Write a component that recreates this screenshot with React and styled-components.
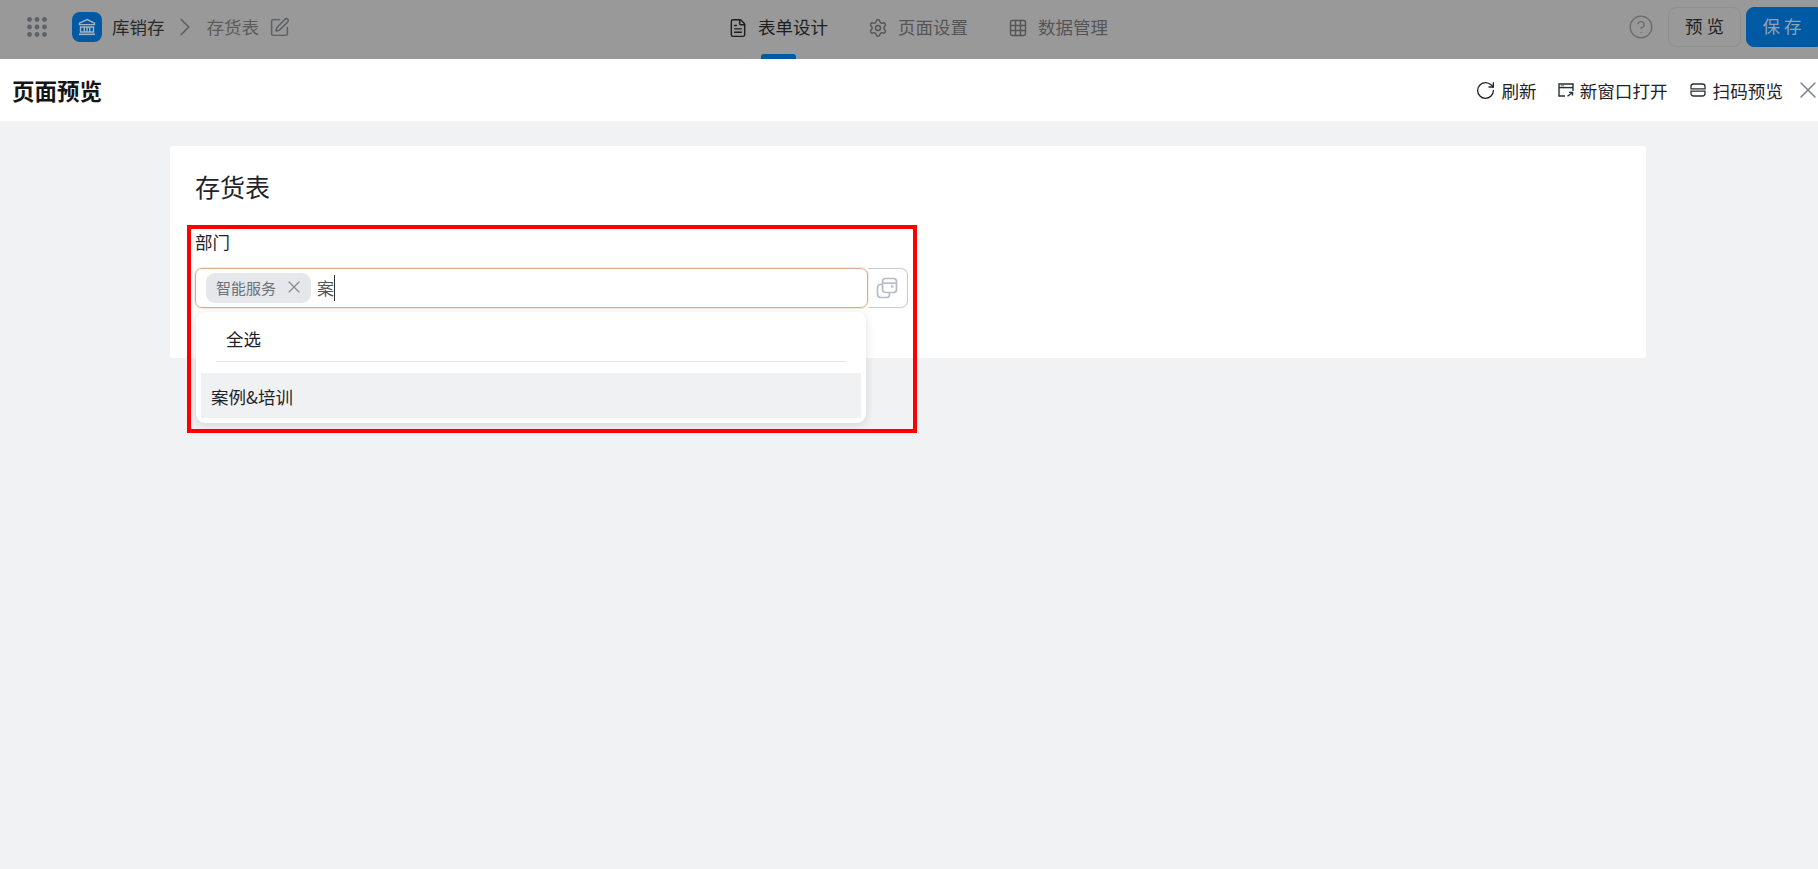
import styled, { createGlobalStyle } from "styled-components";
import {
  ChevronRight,
  CircleHelp,
  FileText,
  Grid3x3,
  RotateCw,
  Settings,
  SquarePen,
  X,
} from "lucide-react";

const GlobalStyle = createGlobalStyle`
  html, body {
    margin: 0;
    padding: 0;
    overflow: hidden;
  }
  body {
    font-family: "Noto Sans CJK SC", "Liberation Sans", sans-serif;
    background: #f1f2f4;
    color: #1f2329;
  }
`;

const Page = styled.div`
  width: 1818px;
  height: 869px;
  display: flex;
  flex-direction: column;
`;

const TopBar = styled.header`
  height: 59px;
  flex: none;
  background: #999999;
  display: grid;
  grid-template-columns: 728px 1fr auto;
  align-items: center;
`;

const Crumbs = styled.div`
  display: flex;
  align-items: center;
  padding: 0 0 5px 27px;
  font-size: 17.5px;
  color: #2a2a2a;
`;

const Dots = styled.svg`
  width: 20px;
  height: 20px;
  margin-right: 25px;
  fill: #5f6368;
`;

const Logo = styled.div`
  width: 30px;
  height: 30px;
  border-radius: 8px;
  background: #0059a3;
  display: flex;
  align-items: center;
  justify-content: center;
  margin-right: 10px;
`;

const Crumb = styled.span`
  color: ${(p) => (p.$muted ? "#5c5c5c" : "#2a2a2a")};
  line-height: 24px;
`;

const CrumbIcon = styled.span`
  display: flex;
  color: #5c5f63;
  margin: ${(p) => p.$margin};
`;

const Tabs = styled.nav`
  display: flex;
  align-items: stretch;
  height: 59px;
  gap: 40px;
`;

const Tab = styled.div`
  position: relative;
  box-sizing: border-box;
  padding-bottom: 3px;
  display: flex;
  align-items: center;
  gap: 10px;
  font-size: 17.5px;
  color: ${(p) => (p.$active ? "#1d1d1d" : "#555555")};

  ${(p) =>
    p.$active &&
    `
    &::after {
      content: "";
      position: absolute;
      left: 33px;
      bottom: 0;
      width: 35px;
      height: 5px;
      border-radius: 3px 3px 0 0;
      background: #0059a3;
    }
  `}
`;

const TabLabel = styled.span`
  padding-bottom: 3px;
`;

const Actions = styled.div`
  display: flex;
  align-items: center;
  padding-bottom: 5px;
  color: #6a6a6a;
`;

const BarButton = styled.button`
  height: 40px;
  width: ${(p) => p.$width}px;
  margin-left: ${(p) => p.$gap}px;
  border-radius: ${(p) => (p.$primary ? "8px 0 0 8px" : "8px")};
  border: 1px solid ${(p) => (p.$primary ? "#0059a3" : "#8f8f8f")};
  background: ${(p) => (p.$primary ? "#0059a3" : "transparent")};
  color: ${(p) => (p.$primary ? "#8fa3b6" : "#222222")};
  font-family: inherit;
  font-size: 17.5px;
  letter-spacing: 4px;
  padding: 0 0 3px 4px;
`;

const PreviewBar = styled.div`
  height: 62px;
  flex: none;
  background: #ffffff;
  display: flex;
  align-items: center;
  justify-content: space-between;
  padding-left: 12px;
`;

const PreviewTitle = styled.h1`
  margin: 0;
  font-size: 22.5px;
  font-weight: 700;
  color: #151515;
`;

const PreviewTools = styled.div`
  display: flex;
  align-items: center;
`;

const Tool = styled.div`
  display: flex;
  align-items: center;
  gap: ${(p) => p.$inner}px;
  font-size: 17.6px;
  color: #1f2329;
  margin-right: ${(p) => p.$gap}px;
`;

const CloseIcon = styled(X)`
  color: #7d828a;
  display: block;
  margin-right: -4px;
`;

const Main = styled.main`
  flex: 1;
  padding: 25px 172px 0 170px;
`;

const Card = styled.section`
  position: relative;
  height: 212px;
  box-sizing: border-box;
  background: #ffffff;
  padding: 21px 25px 0;
`;

const FormTitle = styled.h2`
  margin: 0;
  font-size: 25px;
  font-weight: 400;
  line-height: 38px;
  color: #1f2329;
`;

const Label = styled.div`
  margin-top: 23px;
  font-size: 17.5px;
  line-height: 28px;
  color: #1f2329;
`;

const Row = styled.div`
  margin-top: 12px;
  display: flex;
  width: 713px;
  height: 40px;
`;

const Input = styled.div`
  width: 673px;
  box-sizing: border-box;
  display: flex;
  align-items: center;
  padding-left: 10px;
  border: 1px solid #d9ae8f;
  border-radius: 7px;
  box-shadow: 0 0 0 1px #fbe9dc;
`;

const Tag = styled.div`
  height: 30px;
  width: 105px;
  box-sizing: border-box;
  border-radius: 9px;
  background: #e5e7ea;
  display: flex;
  align-items: center;
  justify-content: space-between;
  padding: 0 7px 2px 10px;
  font-size: 15px;
  color: #6b7079;
`;

const Typed = styled.span`
  margin: 0 0 1px 6px;
  font-size: 17px;
  line-height: 26px;
  color: #555555;
  border-right: 1px solid #333333;
`;

const Addon = styled.div`
  width: 40px;
  box-sizing: border-box;
  border: 1px solid #c5cbd3;
  border-left: none;
  border-radius: 0 7px 7px 0;
  padding-right: 2px;
  display: flex;
  align-items: center;
  justify-content: center;
`;

const Dropdown = styled.div`
  position: absolute;
  left: 26px;
  top: 166px;
  width: 670px;
  height: 111px;
  box-sizing: border-box;
  padding: 0 5px;
  border-radius: 9px;
  background: #ffffff;
  box-shadow: 0 2px 10px rgba(31, 35, 41, 0.14);
`;

const SelectAll = styled.div`
  margin: 0 15px;
  height: 50px;
  box-sizing: border-box;
  padding: 4px 0 0 10px;
  display: flex;
  align-items: center;
  font-size: 17.5px;
  color: #1f2329;
  border-bottom: 1px solid #e3e5e8;
`;

const Option = styled.div`
  margin-top: 11px;
  height: 45px;
  box-sizing: border-box;
  padding: 2px 0 0 10px;
  background: #f0f1f3;
  display: flex;
  align-items: center;
  font-size: 17.5px;
  color: #1f2329;
`;

const Highlight = styled.div`
  position: absolute;
  left: 17px;
  top: 79px;
  width: 730px;
  height: 208px;
  box-sizing: border-box;
  border: 4px solid #ff0000;
  pointer-events: none;
`;

const GridIcon = () => (
  <Dots viewBox="0 0 20 20">
    {[2.5, 10, 17.5].flatMap((y) =>
      [2.5, 10, 17.5].map((x) => <circle key={`${x}-${y}`} cx={x} cy={y} r="2.4" />)
    )}
  </Dots>
);

const BankIcon = () => (
  <svg width="18" height="18" viewBox="0 0 18 18" fill="none" stroke="#a3b2c1" strokeWidth="1.4">
    <path d="M9 1.500L16.500 5.200V6.600H1.500V5.200Z" />
    <path d="M2.500 9H15.500V14H2.500Z" />
    <path d="M6.300 9V14M9 9V14M11.700 9V14" />
    <path d="M1 16.300H17" strokeWidth="1.600" />
  </svg>
);

const NewWindowIcon = () => (
  <svg width="16" height="16" viewBox="0 0 16 16" fill="none" stroke="#2a2f36" strokeWidth="1.4">
    <path d="M7 14H1V2h14v7" />
    <path d="M1 5.600h14" />
    <path d="M2.800 3.800h3.400" stroke="#8a8f96" />
    <path d="M9.500 14.300l4.800-3.600M11 10.400h3.500v3.200" />
  </svg>
);

const ScanIcon = () => (
  <svg width="16" height="16" viewBox="0 0 16 16" fill="none" stroke="#2a2f36" strokeWidth="1.3">
    <path d="M1 6.800V4.500a2.500 2.500 0 0 1 2.500-2.500h9a2.500 2.500 0 0 1 2.500 2.500v2.300z" />
    <path d="M1 9.200v2.300a2.500 2.500 0 0 0 2.500 2.500h9a2.500 2.500 0 0 0 2.500-2.500V9.200z" />
  </svg>
);

const WindowsIcon = () => (
  <svg width="22" height="22" viewBox="0 0 22 22" fill="none" stroke="#b4bcc7" strokeWidth="1.7">
    <path d="M6.500 7.500H4.200A2.700 2.700 0 0 0 1.500 10.200v7.100A3.200 3.200 0 0 0 4.700 20.500h6.100a2.700 2.700 0 0 0 2.700-2.700V15.500" />
    <rect x="6.500" y="1.500" width="14" height="14" rx="3" />
    <path d="M6.500 6.200h14" />
    <path d="M15 9.500h2.600" strokeWidth="2" />
  </svg>
);

export default function App() {
  return (
    <>
      <GlobalStyle />
      <Page>
        <TopBar>
          <Crumbs>
            <GridIcon />
            <Logo>
              <BankIcon />
            </Logo>
            <Crumb>库销存</Crumb>
            <CrumbIcon $margin="0 7px 0 5px">
              <ChevronRight size={30} strokeWidth={1.3} />
            </CrumbIcon>
            <Crumb $muted>存货表</Crumb>
            <CrumbIcon $margin="0 0 0 10px">
              <SquarePen size={21} strokeWidth={1.7} />
            </CrumbIcon>
          </Crumbs>
          <Tabs>
            <Tab $active>
              <FileText size={20} strokeWidth={1.7} />
              <TabLabel>表单设计</TabLabel>
            </Tab>
            <Tab>
              <Settings size={20} strokeWidth={1.7} />
              <TabLabel>页面设置</TabLabel>
            </Tab>
            <Tab>
              <Grid3x3 size={20} strokeWidth={1.7} />
              <TabLabel>数据管理</TabLabel>
            </Tab>
          </Tabs>
          <Actions>
            <CircleHelp size={26} strokeWidth={1.2} />
            <BarButton $width={73} $gap={14}>
              预览
            </BarButton>
            <BarButton $width={72} $gap={5} $primary>
              保存
            </BarButton>
          </Actions>
        </TopBar>
        <PreviewBar>
          <PreviewTitle>页面预览</PreviewTitle>
          <PreviewTools>
            <Tool $gap={21} $inner={5}>
              <RotateCw size={21} strokeWidth={1.5} />
              刷新
            </Tool>
            <Tool $gap={22} $inner={6}>
              <NewWindowIcon />
              新窗口打开
            </Tool>
            <Tool $gap={11} $inner={7}>
              <ScanIcon />
              扫码预览
            </Tool>
            <CloseIcon size={28} strokeWidth={1.3} />
          </PreviewTools>
        </PreviewBar>
        <Main>
          <Card>
            <FormTitle>存货表</FormTitle>
            <Label>部门</Label>
            <Row>
              <Input>
                <Tag>
                  智能服务
                  <X size={20} strokeWidth={1.4} color="#868b93" />
                </Tag>
                <Typed>案</Typed>
              </Input>
              <Addon>
                <WindowsIcon />
              </Addon>
            </Row>
            <Dropdown>
              <SelectAll>全选</SelectAll>
              <Option>案例&培训</Option>
            </Dropdown>
            <Highlight />
          </Card>
        </Main>
      </Page>
    </>
  );
}
